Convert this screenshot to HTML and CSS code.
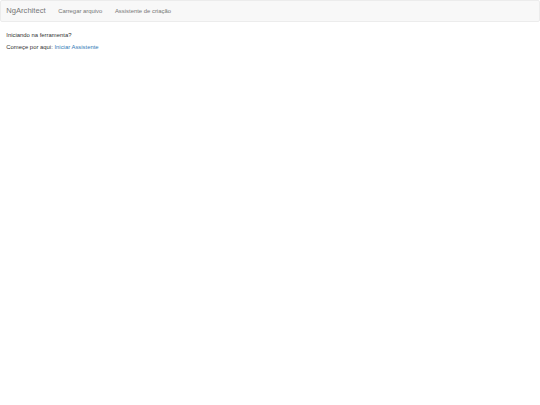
FILE: index.html
```html
<!DOCTYPE html>
<html lang="pt-BR">
<head>
<meta charset="utf-8">
<title>NgArchitect</title>
<link rel="stylesheet" href="styles.css">
</head>
<body>
<nav class="navbar">
  <div class="navbar-inner">
    <a class="navbar-brand" href="#">NgArchitect</a>
    <ul class="nav">
      <li><a href="#">Carregar arquivo</a></li>
      <li><a href="#">Assistente de criação</a></li>
    </ul>
  </div>
</nav>
<main class="content">
  <p>Iniciando na ferramenta?</p>
  <p>Começe por aqui: <a class="link" href="#">Iniciar Assistente</a></p>
</main>
</body>
</html>
```

FILE: styles.css
```css
html, body {
  margin: 0;
  padding: 0;
  background: #fff;
}
body {
  font-family: "Liberation Sans", Arial, sans-serif;
  font-size: 5.9px;
  line-height: 8.4px;
  color: #333;
}
.navbar {
  box-sizing: border-box;
  height: 22px;
  background: #f8f8f8;
  border: 1px solid #ececec;
  border-radius: 2px;
  margin-bottom: 8.6px;
}
.navbar-inner {
  display: flex;
  align-items: center;
  height: 100%;
}
.navbar-brand {
  font-size: 7.6px;
  line-height: 8.4px;
  padding: 0 6.3px 0 5.3px;
  color: #777;
  text-decoration: none;
}
.nav {
  display: flex;
  list-style: none;
  margin: 0;
  padding: 0;
}
.nav a {
  display: block;
  padding: 0 6.3px;
  color: #777;
  text-decoration: none;
}
.content {
  padding: 0 6.3px;
}
.content p {
  margin: 0 0 4.4px;
}
.link {
  color: #337ab7;
  text-decoration: none;
}
```
